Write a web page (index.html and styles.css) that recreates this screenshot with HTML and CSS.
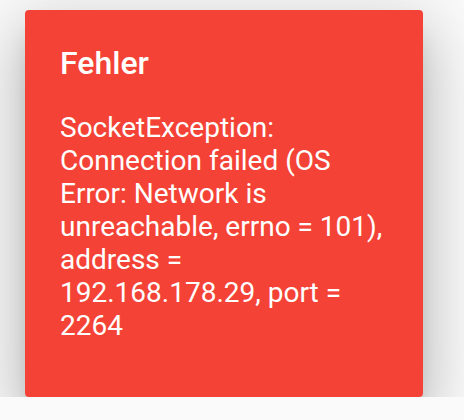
FILE: index.html
```html
<!DOCTYPE html>
<html lang="de">

<head>
  <meta charset="UTF-8" />
  <meta name="viewport" content="width=device-width, initial-scale=1.0" />
  <title>Fehler</title>
  <link rel="stylesheet" href="styles.css">
</head>

<body>
  <div class="dialog">
    <h2 class="dialog-title">Fehler</h2>
    <p class="dialog-content">SocketException: Connection failed (OS Error: Network is unreachable, errno = 101), address = 192.168.178.29, port = 2264</p>
  </div>
</body>

</html>
```

FILE: styles.css
```css
body {
  font-family: 'Roboto', 'Liberation Sans', sans-serif;
  margin: 0;
  padding: 10px 0 0 25px;
  background-color: #fafafa;
  color: #ffffff;
}

.dialog {
  width: 398px;
  height: 387px;
  box-sizing: border-box;
  padding: 35px 35px 0 35px;
  background-color: #f44336;
  border-radius: 4px;
  box-shadow: 0 16px 22px -10px rgba(0, 0, 0, 0.2),
    0 35px 55px 4px rgba(0, 0, 0, 0.14),
    0 13px 67px 12px rgba(0, 0, 0, 0.12);
}

.dialog-title {
  margin: 0 0 28px 0;
  font-size: 32px;
  font-weight: 500;
  line-height: 37.5px;
}

.dialog-content {
  margin: 0;
  font-size: 28px;
  font-weight: 400;
  line-height: 33px;
}
```
